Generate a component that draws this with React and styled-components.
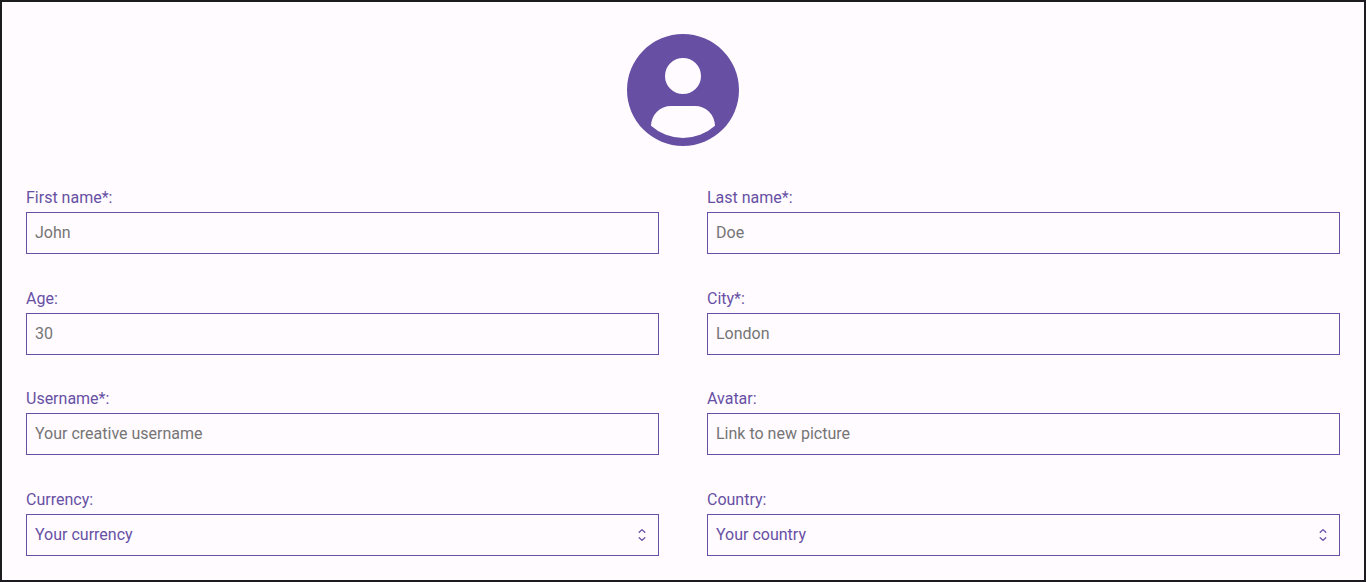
import React from "react";
import styled, { createGlobalStyle, css } from "styled-components";

const GlobalStyle = createGlobalStyle`
  *, *::before, *::after { box-sizing: border-box; }
  body {
    margin: 0;
    background: #fffbff;
    color: #6750a4;
    font-family: Roboto, "Liberation Sans", sans-serif;
    font-size: 16px;
    line-height: 19px;
  }
`;

const Page = styled.main`
  display: flex;
  flex-direction: column;
  min-height: 100vh;
  padding: 32px 24px 24px;
  border: 2px solid #1c1b1f;
`;

const Avatar = styled.svg`
  display: block;
  flex: none;
  align-self: center;
  width: 112px;
  height: 112px;
  margin-bottom: 42px;
  fill: #6750a4;
`;

const Form = styled.form`
  flex: 1;
  display: grid;
  grid-template-columns: repeat(2, minmax(0, 1fr));
  align-content: space-between;
  column-gap: 48px;
`;

const Field = styled.div`
  display: flex;
  flex-direction: column;
  gap: 5px;
`;

const Label = styled.label`
  color: #6750a4;
`;

const control = css`
  display: block;
  width: 100%;
  height: 42px;
  margin: 0;
  padding: 0 8px 1px;
  border: 1px solid #6750a4;
  border-radius: 0;
  background: transparent;
  color: #6750a4;
  font: inherit;
`;

const Input = styled.input`
  ${control}
  &::placeholder { color: #757575; }
`;

const SelectBox = styled.div`
  position: relative;
`;

const Select = styled.select`
  ${control}
  appearance: none;
  padding-right: 32px;
`;

const Arrows = styled.svg`
  position: absolute;
  top: 13px;
  right: 9px;
  width: 16px;
  height: 16px;
  fill: none;
  stroke: #6750a4;
  stroke-width: 1.3;
  stroke-linecap: round;
  stroke-linejoin: round;
  pointer-events: none;
`;

const fields = [
  { id: "firstName", label: "First name*:", hint: "John" },
  { id: "lastName", label: "Last name*:", hint: "Doe" },
  { id: "age", label: "Age:", hint: "30" },
  { id: "city", label: "City*:", hint: "London" },
  { id: "username", label: "Username*:", hint: "Your creative username" },
  { id: "avatar", label: "Avatar:", hint: "Link to new picture" },
  { id: "currency", label: "Currency:", hint: "Your currency", select: true },
  { id: "country", label: "Country:", hint: "Your country", select: true },
];

export default function App() {
  return (
    <>
      <GlobalStyle />
      <Page>
        <Avatar viewBox="0 0 28 28" role="img" aria-label="User avatar">
          <path
            fillRule="evenodd"
            d="M14 0a14 14 0 1 1 0 28a14 14 0 1 1 0-28zM14 6a4.5 4.5 0 1 0 0 9a4.5 4.5 0 1 0 0-9zM6 22.94A5 5 0 0 1 11 18H17A5 5 0 0 1 22 22.94A12 12 0 0 1 6 22.94z"
          />
        </Avatar>
        <Form>
          {fields.map(({ id, label, hint, select }) => (
            <Field key={id}>
              <Label htmlFor={id}>{label}</Label>
              {select ? (
                <SelectBox>
                  <Select id={id} name={id}>
                    <option value="">{hint}</option>
                  </Select>
                  <Arrows viewBox="0 0 16 16" aria-hidden="true">
                    <path d="M5.2 5.3L8 2.6L10.8 5.3M5.2 10.7L8 13.4L10.8 10.7" />
                  </Arrows>
                </SelectBox>
              ) : (
                <Input id={id} name={id} type="text" placeholder={hint} />
              )}
            </Field>
          ))}
        </Form>
      </Page>
    </>
  );
}
